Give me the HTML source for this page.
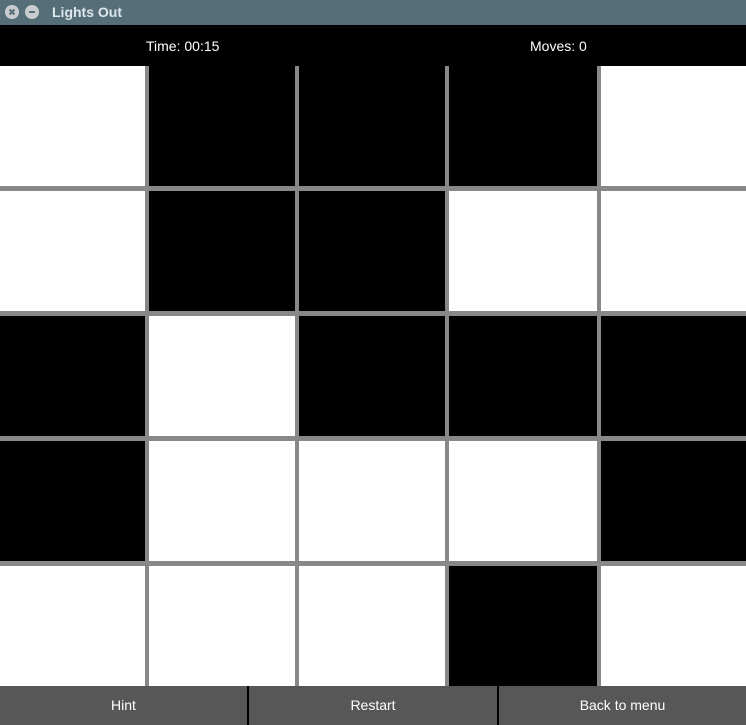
<!DOCTYPE html>
<html><head><style>
*{margin:0;padding:0;box-sizing:border-box}
body{width:746px;height:725px;background:#888;position:relative;overflow:hidden;font-family:"Liberation Sans",sans-serif}
.title{position:absolute;left:0;top:0;width:746px;height:25px;background:#566e78}
.c{position:absolute;top:5px;width:14px;height:14px;border-radius:50%;background:#c9cdcf}
.tt{position:absolute;left:52px;top:4px;color:#dde6ea;font-weight:bold;font-size:14px}
.hdr{position:absolute;left:0;top:25px;width:746px;height:41px;background:#000;color:#fff;font-size:14px}
.cell{position:absolute}
.bar{position:absolute;left:0;top:686px;width:746px;height:39px;background:#000}
.btn{position:absolute;top:686px;height:39px;background:#575757;color:#fff;font-size:14px;text-align:center;line-height:39px}
</style></head><body>
<div class="title">
<div class="c" style="left:5px"><svg width="14" height="14"><path d="M4.5 4.5L9.5 9.5M9.5 4.5L4.5 9.5" stroke="#566e78" stroke-width="2"/></svg></div>
<div class="c" style="left:25px"><svg width="14" height="14"><path d="M4 7H10" stroke="#566e78" stroke-width="2"/></svg></div>
<div class="tt">Lights Out</div>
</div>
<div class="hdr"><span style="position:absolute;left:146px;top:13px">Time: 00:15</span><span style="position:absolute;left:530px;top:13px">Moves: 0</span></div>
<div id="g"></div>
<div class="bar"></div>
<div class="btn" style="left:0;width:247px">Hint</div>
<div class="btn" style="left:249px;width:248px">Restart</div>
<div class="btn" style="left:499px;width:247px">Back to menu</div>
<script>
var xs=[[0,145],[149,295],[299,445],[449,597],[601,746]];
var ys=[[66,186],[191,311],[316,436],[441,561],[566,686]];
var m=["WBBBW","WBBWW","BWBBB","BWWWB","WWWBW"];
var h="";
for(var r=0;r<5;r++)for(var c=0;c<5;c++){
h+='<div class="cell" style="left:'+xs[c][0]+'px;top:'+ys[r][0]+'px;width:'+(xs[c][1]-xs[c][0])+'px;height:'+(ys[r][1]-ys[r][0])+'px;background:'+(m[r][c]=="W"?"#fff":"#000")+'"></div>';}
document.getElementById("g").innerHTML=h;
</script>
</body></html>
